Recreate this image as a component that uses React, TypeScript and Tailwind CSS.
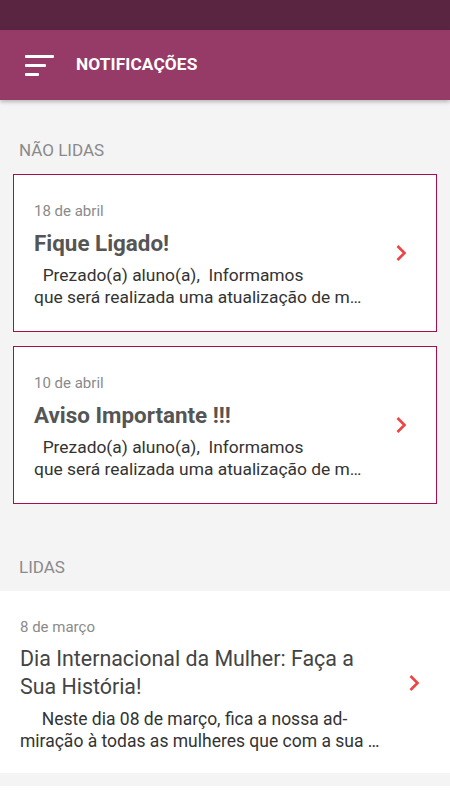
import React from "react";

function Chevron({ className = "" }: { className?: string }) {
  return (
    <svg width="12" height="18" viewBox="0 0 12 18" className={"shrink-0 " + className}>
      <path d="M2.5 2 L9.5 9 L2.5 16" fill="none" stroke="#ef4343" strokeWidth="2.6" />
    </svg>
  );
}

function UnreadCard({ date, title }: { date: string; title: string }) {
  return (
    <div className="ml-[13px] mr-[13px] border border-[#a5104a] bg-white flex items-center pl-[20px] pr-[29px] pt-[26px] pb-[23px]">
      <div className="flex-1 min-w-0 pr-[20px]">
        <div className="text-[15px] leading-[20px] text-[#8a8a8a]">{date}</div>
        <div className="mt-[8px] text-[22.4px] leading-[28px] font-bold text-[#555555]">{title}</div>
        <div className="mt-[7px] text-[17.4px] leading-[22px] text-[#333333]">
          <div className="whitespace-pre">{"  Prezado(a) aluno(a),  Informamos"}</div>
          <div className="whitespace-nowrap">que será realizada uma atualização de m…</div>
        </div>
      </div>
      <Chevron className="mb-[3px]" />
    </div>
  );
}

export default function App() {
  return (
    <div
      className="w-[450px] h-[800px] overflow-hidden bg-[#f4f4f4] flex flex-col"
      style={{ fontFamily: "Roboto, 'Noto Sans', sans-serif" }}
    >
      <div className="h-[30px] bg-[#5a2541] shrink-0" />
      <div className="h-[70px] bg-[#963a67] shrink-0 flex items-center pl-[25px] shadow-[0_2px_4px_rgba(0,0,0,0.25)] relative z-10">
        <div className="flex flex-col gap-[6px] w-[29px]">
          <div className="h-[3px] w-[29px] bg-white rounded-[1px]" />
          <div className="h-[3px] w-[21px] bg-white rounded-[1px]" />
          <div className="h-[3px] w-[14px] bg-white rounded-[1px]" />
        </div>
        <div className="ml-[22px] text-white font-bold text-[17.3px] tracking-[0.1px]">NOTIFICAÇÕES</div>
      </div>

      <div className="pt-[38px] pl-[19px] text-[17px] leading-[24px] text-[#8a8a8a]">NÃO LIDAS</div>
      <div className="mt-[12px] flex flex-col gap-[14px]">
        <UnreadCard date="18 de abril" title="Fique Ligado!" />
        <UnreadCard date="10 de abril" title="Aviso Importante !!!" />
      </div>

      <div className="mt-[51px] pl-[19px] text-[17px] leading-[24px] text-[#8a8a8a]">LIDAS</div>
      <div className="mt-[12px] bg-white flex items-center pl-[20px] pr-[30px] pt-[26px] pb-[21px]">
        <div className="flex-1 min-w-0 pr-[20px]">
          <div className="text-[15px] leading-[20px] text-[#8a8a8a]">8 de março</div>
          <div className="mt-[8px] text-[21.4px] leading-[28px] text-[#444444]">
            <div className="whitespace-nowrap">Dia Internacional da Mulher: Faça a</div>
            <div className="whitespace-nowrap">Sua História!</div>
          </div>
          <div className="mt-[7px] text-[17.5px] leading-[22px] text-[#333333]">
            <div className="whitespace-pre">{"     Neste dia 08 de março, fica a nossa ad-"}</div>
            <div className="whitespace-nowrap">miração à todas as mulheres que com a sua …</div>
          </div>
        </div>
        <Chevron className="mb-[3px]" />
      </div>
      <div className="h-[13px] shrink-0" />
      <div className="flex-1 bg-white" />
    </div>
  );
}
